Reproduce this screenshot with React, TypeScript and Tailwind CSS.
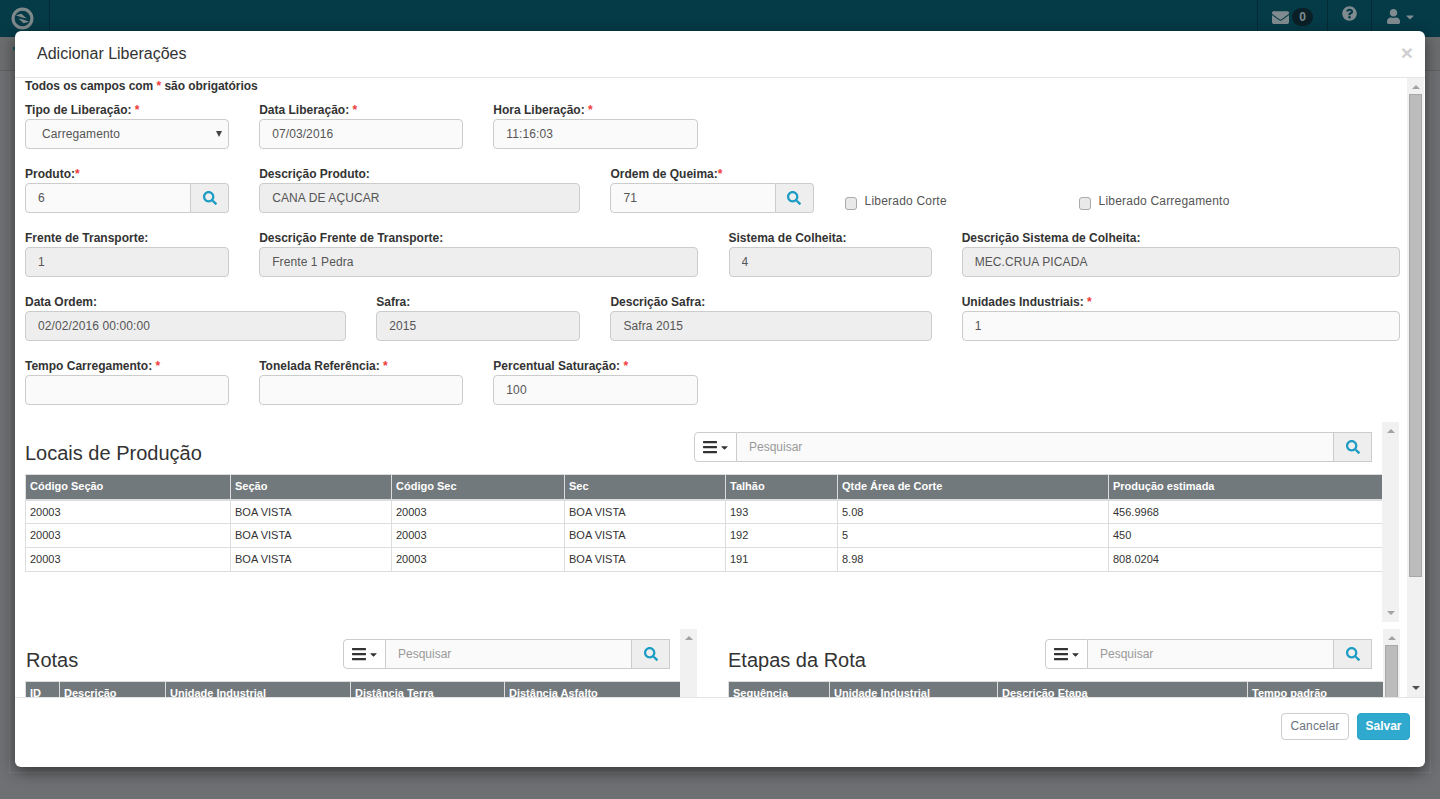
import React from "react";
import { FaSearch, FaBars, FaCaretDown, FaEnvelope, FaQuestionCircle, FaUser } from "react-icons/fa";

const Req = () => <span className="text-[#f03a3a]">*</span>;

const Field = ({ label, req, tight, value, disabled, span, hasSearch }: {
  label: string;
  req?: boolean;
  tight?: boolean;
  value?: string;
  disabled?: boolean;
  span: string;
  hasSearch?: boolean;
}) => (
  <div className={span}>
    <div className="h-[17px] text-[12px] leading-[17px] font-bold text-[#333] whitespace-nowrap">
      {label}
      {req && !tight && " "}
      {req && <Req />}
    </div>
    <div className="flex h-[30px]">
      <input
        readOnly
        value={value || ""}
        className={`h-[30px] min-w-0 flex-1 border border-[#ccc] px-3 text-[12px] tracking-[0.1px] text-[#555] outline-none ${disabled ? "bg-[#eeeeee]" : "bg-[#fafafa]"} ${hasSearch ? "rounded-l-[4px]" : "rounded-[4px]"}`}
      />
      {hasSearch && (
        <div className="flex h-[30px] w-[38px] items-center justify-center rounded-r-[4px] border border-l-0 border-[#ccc] bg-[#eeeeee] text-[#1b9cc4]">
          <FaSearch size={14} />
        </div>
      )}
    </div>
  </div>
);

const SearchBar = ({ width }: { width: string }) => (
  <div className={`flex h-[30px] ${width}`}>
    <div className="flex w-[43px] items-center justify-center gap-[1px] rounded-l-[4px] border border-[#ccc] bg-white text-[#333]">
      <FaBars size={16} />
      <FaCaretDown size={11} />
    </div>
    <input
      readOnly
      placeholder="Pesquisar"
      className="min-w-0 flex-1 border-y border-[#ccc] bg-[#fafafa] px-3 text-[12px] text-[#555] outline-none placeholder:text-[#999]"
    />
    <div className="flex w-[39px] items-center justify-center border border-[#ccc] bg-[#eeeeee] text-[#1b9cc4]">
      <FaSearch size={14} />
    </div>
  </div>
);

const DataTable = ({ cols, head, rows }: { cols: number[]; head: string[]; rows: string[][] }) => (
  <table className="w-full table-fixed border-collapse text-[11px]">
    <colgroup>
      {cols.map((w, i) => (
        <col key={i} style={{ width: w }} />
      ))}
    </colgroup>
    <thead>
      <tr className="h-[25px] bg-[#72797c] text-white">
        {head.map((h) => (
          <th key={h} className="border border-[#ddd] border-b-2 px-1 pb-[1px] text-left font-bold">
            {h}
          </th>
        ))}
      </tr>
    </thead>
    <tbody>
      {rows.map((row, i) => (
        <tr key={i} className="h-[24px] text-[#333]">
          {row.map((c, j) => (
            <td key={j} className="border border-[#ddd] px-1">
              {c}
            </td>
          ))}
        </tr>
      ))}
    </tbody>
  </table>
);

const ScrollStrip = ({ thumb }: { thumb?: boolean }) => (
  <div className="flex w-[17px] shrink-0 flex-col items-center justify-between bg-[#f1f1f1]">
    <div className="flex w-full flex-col items-center">
      <div className="mt-[7px] h-0 w-0 border-x-[4px] border-b-[4px] border-x-transparent border-b-[#a3a3a3]" />
      {thumb && <div className="mt-[5px] h-[60px] w-[13px] border border-[#a8a8a8] bg-[#bcbcbc]" />}
    </div>
    {!thumb && (
      <div className="mb-[7px] h-0 w-0 border-x-[4px] border-t-[4px] border-x-transparent border-t-[#a3a3a3]" />
    )}
  </div>
);

const Check = ({ label, className }: { label: string; className?: string }) => (
  <label className={`flex items-center gap-[8px] text-[12px] tracking-[0.2px] text-[#555] ${className || ""}`}>
    <input
      type="checkbox"
      readOnly
      className="mt-[3px] h-[13px] w-[12px] appearance-none rounded-[3px] border border-[#aaa] bg-[#e9e9e9]"
    />
    <span className="-mt-[1px]">{label}</span>
  </label>
);

const locais = [
  ["20003", "BOA VISTA", "20003", "BOA VISTA", "193", "5.08", "456.9968"],
  ["20003", "BOA VISTA", "20003", "BOA VISTA", "192", "5", "450"],
  ["20003", "BOA VISTA", "20003", "BOA VISTA", "191", "8.98", "808.0204"],
];

export default function App() {
  return (
    <div className="relative h-[799px] w-[1440px] overflow-hidden bg-[#6f7073] font-['Liberation_Sans',Arial,sans-serif]">
      {/* navbar behind the backdrop */}
      <div className="flex h-[37px] bg-[#053a47] text-[#7f8b8f]">
        <div className="flex w-[50px] items-center justify-center border-r border-[#032b35] pr-[4px]">
          <svg width="23" height="23" viewBox="0 0 22 22" fill="none">
            <circle cx="11" cy="11" r="9" stroke="#7f898b" strokeWidth="3" />
            <path d="M4.5 8 L10 6.5 L15 11 L10.5 10 Z" fill="#7f898b" />
            <path d="M17.5 14 L12 15.5 L7 11 L11.5 12 Z" fill="#7f898b" />
          </svg>
        </div>
        <div className="ml-auto flex">
          <div className="flex w-[71px] items-center justify-center gap-[3px] border-x border-[#032b35] pb-[3px]">
            <FaEnvelope size={17} />
            <span className="flex h-[18px] w-[21px] items-center justify-center rounded-full bg-[#0b1f27] text-[12px] font-bold">0</span>
          </div>
          <div className="flex w-[44px] items-start justify-center border-r border-[#032b35] pt-[6px]">
            <FaQuestionCircle size={15} />
          </div>
          <div className="flex w-[68px] items-start justify-center gap-[3px] pr-[10px] pt-[9px]">
            <FaUser size={15} />
            <FaCaretDown size={12} className="mt-[2px]" />
          </div>
        </div>
      </div>

      {/* page behind the backdrop */}
      <div className="flex h-[34px] items-start border-b border-[#5f6163] bg-[#6b6d6e] pl-[13px] pt-[10px]">
        <span className="h-[3px] w-[3px] bg-[#0f5a68]" />
      </div>
      <div className="mx-[9px] h-[702px] border-x border-b border-[#7a7b7e]" />

      {/* modal */}
      <div className="absolute left-[15px] top-[31px] flex h-[736px] w-[1410px] flex-col overflow-hidden rounded-[6px] bg-white shadow-[0_5px_15px_rgba(0,0,0,0.5)]">
        <div className="flex h-[47px] shrink-0 items-center justify-between border-b border-[#e5e5e5] pl-[22px] pr-[12px]">
          <h4 className="text-[16px] text-[#333]">Adicionar Liberações</h4>
          <span className="-mt-[3px] text-[21px] font-bold leading-none text-[#cfcfcf]">×</span>
        </div>

        <div className="flex h-[619px] shrink-0 overflow-hidden">
          <div className="min-w-0 flex-1 pl-[10px] pr-[7px]">
            <div className="h-[17px] pt-[1px] text-[12px] font-bold leading-[14px] tracking-[-0.05px] text-[#333]">
              Todos os campos com <Req /> são obrigatórios
            </div>
            <div className="mt-[7px] grid grid-cols-12 gap-x-[30px] gap-y-[17px]">
              <div className="col-span-2">
                <div className="h-[17px] text-[12px] font-bold leading-[17px] text-[#333]">
                  Tipo de Liberação: <Req />
                </div>
                <div className="flex h-[30px] items-center justify-between rounded-[4px] border border-[#ccc] bg-[#fafafa] pl-[16px] pr-[6px] text-[12px] tracking-[0.1px] text-[#555]">
                  Carregamento
                  <span className="h-0 w-0 border-x-[3px] border-t-[6px] border-x-transparent border-t-[#444]" />
                </div>
              </div>
              <Field span="col-span-2" label="Data Liberação:" req value="07/03/2016" />
              <Field span="col-span-2" label="Hora Liberação:" req value="11:16:03" />
              <div className="col-span-6" />

              <Field span="col-span-2" label="Produto:" req tight value="6" hasSearch />
              <Field span="col-span-3" label="Descrição Produto:" value="CANA DE AÇUCAR" disabled />
              <Field span="col-span-2 pr-[1px]" label="Ordem de Queima:" req tight value="71" hasSearch />
              <div className="col-span-5 flex items-center pt-[24px]">
                <Check label="Liberado Corte" className="w-[234px]" />
                <Check label="Liberado Carregamento" />
              </div>

              <Field span="col-span-2" label="Frente de Transporte:" value="1" disabled />
              <Field span="col-span-4" label="Descrição Frente de Transporte:" value="Frente 1 Pedra" disabled />
              <Field span="col-span-2 pl-[1px]" label="Sistema de Colheita:" value="4" disabled />
              <Field span="col-span-4" label="Descrição Sistema de Colheita:" value="MEC.CRUA PICADA" disabled />

              <Field span="col-span-3" label="Data Ordem:" value="02/02/2016 00:00:00" disabled />
              <Field span="col-span-2" label="Safra:" value="2015" disabled />
              <Field span="col-span-3" label="Descrição Safra:" value="Safra 2015" disabled />
              <Field span="col-span-4" label="Unidades Industriais:" req value="1" />

              <Field span="col-span-2" label="Tempo Carregamento:" req />
              <Field span="col-span-2" label="Tonelada Referência:" req />
              <Field span="col-span-2" label="Percentual Saturação:" req value="100" />
            </div>

            {/* locais de producao */}
            <div className="mr-[1px] mt-[17px] flex h-[200px]">
              <div className="min-w-0 flex-1">
                <div className="flex h-[52px] items-start justify-between pr-[10px] pt-[10px]">
                  <h4 className="mt-[9px] text-[20px] leading-[24px] text-[#333]">Locais de Produção</h4>
                  <SearchBar width="w-[678px]" />
                </div>
                <DataTable
                  cols={[205, 161, 173, 161, 112, 271, 274]}
                  head={["Código Seção", "Seção", "Código Sec", "Sec", "Talhão", "Qtde Área de Corte", "Produção estimada"]}
                  rows={locais}
                />
              </div>
              <ScrollStrip />
            </div>

            {/* rotas e etapas */}
            <div className="mt-[7px] flex gap-[31px]">
              <div className="flex h-[200px] w-[672px]">
                <div className="min-w-0 flex-1">
                  <div className="flex h-[52px] items-start justify-between pr-[10px] pt-[10px]">
                    <h4 className="mt-[9px] pl-[1px] text-[20px] leading-[24px] text-[#333]">Rotas</h4>
                    <SearchBar width="w-[327px]" />
                  </div>
                  <DataTable
                    cols={[34, 106, 185, 154, 176]}
                    head={["ID", "Descrição", "Unidade Industrial", "Distância Terra", "Distância Asfalto"]}
                    rows={[]}
                  />
                </div>
                <ScrollStrip />
              </div>
              <div className="flex h-[200px] min-w-0 flex-1">
                <div className="min-w-0 flex-1">
                  <div className="flex h-[52px] items-start justify-between pr-[11px] pt-[10px]">
                    <h4 className="mt-[9px] text-[20px] leading-[24px] text-[#333]">Etapas da Rota</h4>
                    <SearchBar width="w-[327px]" />
                  </div>
                  <DataTable
                    cols={[101, 168, 250, 136]}
                    head={["Sequência", "Unidade Industrial", "Descrição Etapa", "Tempo padrão"]}
                    rows={[]}
                  />
                </div>
                <ScrollStrip thumb />
              </div>
            </div>
          </div>

          {/* outer scrollbar */}
          <div className="mr-[1px] flex w-[17px] shrink-0 flex-col items-center justify-between bg-[#f1f1f1]">
            <div className="flex w-full flex-col items-center">
              <div className="mt-[7px] h-0 w-0 border-x-[4px] border-b-[4px] border-x-transparent border-b-[#a3a3a3]" />
              <div className="mt-[5px] h-[483px] w-[13px] border border-[#a8a8a8] bg-[#bcbcbc]" />
            </div>
            <div className="mb-[7px] h-0 w-0 border-x-[4px] border-t-[4px] border-x-transparent border-t-[#505050]" />
          </div>
        </div>

        <div className="flex flex-1 items-start justify-end gap-[8px] border-t border-[#e5e5e5] pr-[15px] pt-[15px]">
          <button className="h-[27px] w-[68px] rounded-[4px] border border-[#ccc] bg-white pb-[1px] text-[12px] tracking-[0.1px] text-[#6b7280]">Cancelar</button>
          <button className="h-[27px] w-[53px] rounded-[4px] border border-[#28a4c9] bg-[#2fa9cd] pb-[1px] text-[12px] font-bold text-white">Salvar</button>
        </div>
      </div>
    </div>
  );
}
